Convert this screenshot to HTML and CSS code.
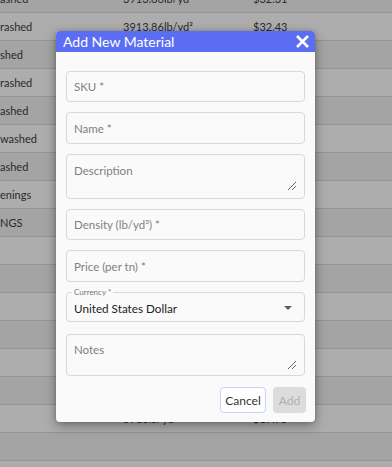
FILE: index.html
```html
<!DOCTYPE html>
<html>
<head>
<meta charset="utf-8">
<link rel="stylesheet" href="styles.css">
</head>
<body>
<div class="table">
  <div class="row"><span>ashed</span><span>3913.86lb/yd²</span><span>$32.31</span></div>
  <div class="row"><span>rashed</span><span>3913.86lb/yd²</span><span>$32.43</span></div>
  <div class="row"><span>shed</span><span></span><span></span></div>
  <div class="row"><span>rashed</span><span></span><span></span></div>
  <div class="row"><span>ashed</span><span></span><span></span></div>
  <div class="row"><span>washed</span><span></span><span></span></div>
  <div class="row"><span>ashed</span><span></span><span></span></div>
  <div class="row"><span>enings</span><span></span><span></span></div>
  <div class="row"><span>NGS</span><span></span><span></span></div>
  <div class="row"><span></span><span></span><span></span></div>
  <div class="row"><span></span><span></span><span></span></div>
  <div class="row"><span></span><span></span><span></span></div>
  <div class="row"><span></span><span></span><span></span></div>
  <div class="row"><span></span><span></span><span></span></div>
  <div class="row"><span></span><span>12lb/yd²</span><span>$13.00</span></div>
  <div class="row"><span></span><span>3913lb/yd²</span><span>$17.75</span></div>
  <div class="row"><span></span><span></span><span></span></div>
  <div class="row"><span></span><span></span><span></span></div>
</div>

<div class="dialog">
  <div class="dlg-head">
    <span class="dlg-title">Add New Material</span>
    <svg class="close" width="13" height="13" viewBox="0 0 13 13"><path d="M1 1L12 12M12 1L1 12" stroke="#fff" stroke-width="2.6" stroke-linecap="butt"/></svg>
  </div>
  <div class="dlg-body">
    <div class="field f-sku"><span class="ph">SKU *</span></div>
    <div class="field f-std"><span class="ph">Name *</span></div>
    <div class="field area f-desc"><span class="ph">Description</span>
      <svg class="grip" width="9" height="8" viewBox="0 0 9 8"><path d="M1 8L9 0M5 8L9 4" stroke="#555" stroke-width="0.9"/></svg>
    </div>
    <div class="field f-sku"><span class="ph">Density (lb/yd³) *</span></div>
    <div class="field f-std"><span class="ph">Price (per tn) *</span></div>
    <div class="field select"><span class="legend">Currency *</span><span class="val">United States Dollar</span>
      <svg class="caret" width="8" height="4" viewBox="0 0 8 4"><path d="M0 0H8L4 4Z" fill="#5f5f5f"/></svg>
    </div>
    <div class="field area f-notes"><span class="ph">Notes</span>
      <svg class="grip" width="9" height="8" viewBox="0 0 9 8"><path d="M1 8L9 0M5 8L9 4" stroke="#555" stroke-width="0.9"/></svg>
    </div>
    <div class="actions">
      <button class="btn cancel">Cancel</button>
      <button class="btn add">Add</button>
    </div>
  </div>
</div>
</body>
</html>
```
FILE: styles.css
```css
html, body {
  margin: 0;
  padding: 0;
}
body {
  width: 392px;
  height: 467px;
  overflow: hidden;
  position: relative;
  background: #aaaaaa;
  font-family: Lato, "Open Sans", sans-serif;
}
.table {
  margin-top: -15px;
}
.row {
  display: grid;
  grid-template-columns: 123px 130px 1fr;
  align-items: center;
  height: 27px;
  border-bottom: 1px solid #959595;
  font-size: 11px;
  color: #2a2a2a;
  white-space: nowrap;
}
.row:nth-child(odd) {
  background: #a4a4a4;
}
.row:nth-child(even) {
  background: #adadad;
}

.dialog {
  position: absolute;
  left: 56px;
  top: 31px;
  width: 259px;
  height: 391px;
  background: #fafafa;
  border-radius: 4px;
  overflow: hidden;
  box-shadow: 0 4px 12px rgba(0, 0, 0, 0.35), 0 0 4px rgba(0, 0, 0, 0.18);
}
.dlg-head {
  height: 21px;
  background: #5b6ef3;
  color: #fff;
  display: flex;
  align-items: center;
  justify-content: space-between;
  padding: 0 6px 0 7px;
}
.dlg-title {
  font-size: 14px;
  line-height: 21px;
}
.close {
  display: block;
}
.dlg-body {
  padding: 19px 10px 0;
  display: flex;
  flex-direction: column;
  gap: 10px;
}
.field {
  position: relative;
  box-sizing: border-box;
  border: 1px solid #d8d8d8;
  border-radius: 4px;
  background: #fafafa;
  display: flex;
  align-items: center;
  padding: 0 7px;
  font-size: 11.5px;
  color: #808080;
}
.f-sku {
  height: 31px;
}
.f-std {
  height: 32px;
}
.area {
  align-items: flex-start;
  padding-top: 9px;
}
.f-desc {
  height: 45px;
}
.f-notes {
  height: 42px;
  margin-top: 2px;
  padding-top: 8px;
}
.grip {
  position: absolute;
  right: 8px;
  bottom: 8px;
}
.f-notes .grip {
  bottom: 6px;
}
.select {
  height: 30px;
  justify-content: space-between;
  padding-top: 2px;
  padding-right: 12px;
}
.legend {
  position: absolute;
  top: -6px;
  left: 5px;
  padding: 0 2px;
  font-size: 8px;
  line-height: 10px;
  color: #777;
  background: #fafafa;
}
.val {
  color: #222;
  font-size: 11.7px;
}
.caret {
  display: block;
}
.actions {
  display: flex;
  justify-content: flex-end;
  gap: 7px;
  margin-top: 1px;
}
.btn {
  font-family: Lato, "Open Sans", sans-serif;
  font-size: 12px;
  height: 26px;
  border-radius: 4px;
  padding: 0;
  box-sizing: border-box;
}
.cancel {
  width: 46px;
  background: #ffffff;
  border: 1px solid #c9d0fa;
  color: #333;
}
.add {
  width: 33px;
  background: #dcdcdc;
  border: none;
  color: #b0b0b0;
  margin-right: -1px;
}
```
